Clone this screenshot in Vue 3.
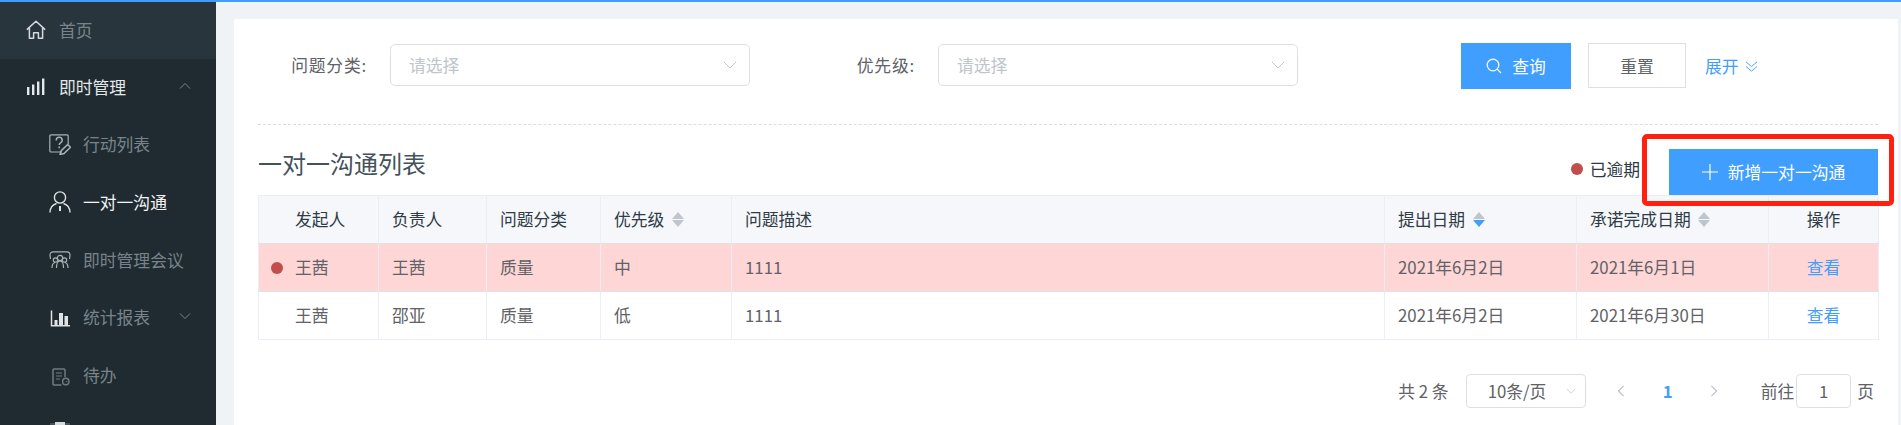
<script setup>
const menu = [
  { key: 'ask', label: '行动列表' },
  { key: 'person', label: '一对一沟通', active: true },
  { key: 'meet', label: '即时管理会议' },
  { key: 'stat', label: '统计报表', chevron: true },
  { key: 'todo', label: '待办' },
  { key: 'more', label: '' }
]
const columns = [
  { label: '发起人', cls: 'first' },
  { label: '负责人' },
  { label: '问题分类' },
  { label: '优先级', sort: 'none' },
  { label: '问题描述' },
  { label: '提出日期', sort: 'down' },
  { label: '承诺完成日期', sort: 'none' },
  { label: '操作', cls: 'center' }
]
const rows = [
  { overdue: true, cells: ['王茜', '王茜', '质量', '中', '1111', '2021年6月2日', '2021年6月1日'] },
  { overdue: false, cells: ['王茜', '邵亚', '质量', '低', '1111', '2021年6月2日', '2021年6月30日'] }
]
const widths = [120, 108, 114, 131, 653, 192, 192, 110]
</script>

<template>
  <div class="page">
    <aside class="side">
      <div class="home">
        <svg class="top-ic" viewBox="0 0 20 20" fill="none" stroke="currentColor" stroke-width="1.5"><path d="M.8 9.6 10 1.3l9.200 8.300M3.400 8v10.200h4.200v-5.400h4.800v5.400h4.200V8" stroke-linejoin="round"/></svg>
        <span>首页</span>
      </div>
      <div class="group">
        <svg class="top-ic" viewBox="0 0 20 20" fill="currentColor"><rect x="1" y="10" width="2.400" height="8"/><rect x="6" y="7.500" width="2.400" height="10.500"/><rect x="11" y="4.500" width="2.400" height="13.500"/><rect x="16" y="1.500" width="2.400" height="16.500"/></svg>
        <span>即时管理</span>
        <svg class="chev" viewBox="0 0 12 8" fill="none" stroke="currentColor"><path d="M1 6.500 6 1.500l5 5"/></svg>
      </div>
      <div v-for="m in menu" :key="m.key" class="sub" :class="[m.key, { active: m.active }]">
        <svg class="sub-ic" viewBox="0 0 22 22" fill="none" stroke="currentColor" stroke-width="1.200">
          <template v-if="m.key === 'ask'">
            <path d="M13 19H2a1.200 1.200 0 0 1-1.200-1.200V3A1.200 1.200 0 0 1 2 1.800h16A1.200 1.200 0 0 1 19.200 3v8"/>
            <path d="M7.200 7.500c0-4.200 6-4.200 6 0 0 2.200-3 2.200-3 4.500M10.200 13.500v1.800" stroke-width="1.500"/>
            <path d="m11 21.500 1.200-3.800 6.500-6.200 2.800 2.800-6.500 6.200z" stroke-width="1.500"/>
          </template>
          <template v-else-if="m.key === 'person'">
            <circle cx="11" cy="6.500" r="5.600" stroke-width="1.400"/>
            <path d="M1 21.500c0-5 3.500-8 6.500-9M21 21.500c0-5-3.500-8-6.500-9" stroke-width="1.400"/>
            <path d="M11 15v5" stroke-width="2"/>
          </template>
          <template v-else-if="m.key === 'meet'">
            <path d="M1.500 10 1 6c0-2 1.500-3.200 3-3.200h14c1.500 0 3 1.200 3 3.200l-.5 4"/>
            <circle cx="11" cy="9" r="2.700"/>
            <circle cx="6.500" cy="11" r="2.200"/>
            <circle cx="15.500" cy="11" r="2.200"/>
            <path d="M3 19c0-3 1-5 3-5.500M19 19c0-3-1-5-3-5.500M7.500 19c0-4 1.500-7 3.500-7s3.500 3 3.500 7"/>
          </template>
          <template v-else-if="m.key === 'stat'">
            <path d="M2.500 4.500v15.300H21" stroke-width="1.500"/>
            <g fill="currentColor" stroke="none"><rect x="5.500" y="14" width="3" height="5"/><rect x="10" y="7" width="4" height="12"/><rect x="15.500" y="10" width="3.500" height="9"/></g>
          </template>
          <template v-else-if="m.key === 'todo'">
            <path d="M12.500 21H5a1 1 0 0 1-1-1V6a1 1 0 0 1 1-1h10a1 1 0 0 1 1 1v7" stroke-width="1.500"/>
            <path d="M7 9h6M7 12h6M7 15h4"/>
            <circle cx="16.800" cy="17.500" r="3.200" stroke-width="1.400"/>
            <path d="M16.800 17.500h1.800" stroke-width=".8"/>
          </template>
          <template v-else>
            <path d="M1 3h5M16 3h5"/>
            <rect x="6" y="1" width="10" height="3" fill="#d8dcde" stroke="none"/>
          </template>
        </svg>
        <span>{{ m.label }}</span>
        <svg v-if="m.chevron" class="chev" viewBox="0 0 12 8" fill="none" stroke="currentColor"><path d="M1 1.500 6 6.500l5-5"/></svg>
      </div>
    </aside>

    <main class="main">
      <section class="card">
        <div class="filters">
          <div class="field">
            <label>问题分类:</label>
            <div class="select">
              <span>请选择</span>
              <svg viewBox="0 0 14 8" fill="none" stroke="currentColor"><path d="M1 1l6 6 6-6"/></svg>
            </div>
          </div>
          <div class="field second">
            <label>优先级:</label>
            <div class="select">
              <span>请选择</span>
              <svg viewBox="0 0 14 8" fill="none" stroke="currentColor"><path d="M1 1l6 6 6-6"/></svg>
            </div>
          </div>
          <button class="btn primary search">
            <svg viewBox="0 0 16 16" fill="none" stroke="currentColor" stroke-width="1.200"><circle cx="7" cy="7" r="5.800"/><path d="m11.200 11.200 3.800 3.800"/></svg>
            查询
          </button>
          <button class="btn reset">重置</button>
          <span class="expand">
            展开
            <svg viewBox="0 0 14 12" fill="none" stroke="currentColor"><path d="M1 1l6 5 6-5M1 6l6 5 6-5"/></svg>
          </span>
        </div>

        <div class="title-row">
          <h2>一对一沟通列表</h2>
          <div class="right">
            <span class="legend"><i class="dot"></i>已逾期</span>
            <button class="btn primary add">
              <svg viewBox="0 0 16 16" fill="none" stroke="currentColor" stroke-width="1.200"><path d="M8 0v16M0 8h16"/></svg>
              新增一对一沟通
            </button>
          </div>
          <div class="mark"></div>
        </div>

        <table class="table">
          <colgroup>
            <col v-for="(w, i) in widths" :key="i" :style="{ width: w + 'px' }" />
          </colgroup>
          <thead>
            <tr>
              <th v-for="c in columns" :key="c.label" :class="c.cls">
                {{ c.label }}
                <span v-if="c.sort" class="sort" :class="c.sort"><i class="up"></i><i class="dn"></i></span>
              </th>
            </tr>
          </thead>
          <tbody>
            <tr v-for="(r, ri) in rows" :key="ri" :class="{ overdue: r.overdue }">
              <td v-for="(cell, ci) in r.cells" :key="ci" :class="{ first: ci === 0 }">
                <i v-if="ci === 0 && r.overdue" class="dot row-dot"></i>{{ cell }}
              </td>
              <td class="center link">查看</td>
            </tr>
          </tbody>
        </table>

        <div class="pager">
          <span class="total">共 2 条</span>
          <div class="size">
            <span>10条/页</span>
            <svg viewBox="0 0 14 8" fill="none" stroke="currentColor"><path d="M1 1l6 6 6-6"/></svg>
          </div>
          <svg class="arrow prev" viewBox="0 0 8 14" fill="none" stroke="currentColor" stroke-width="1.500"><path d="M7 1 1 7l6 6"/></svg>
          <span class="num">1</span>
          <svg class="arrow next" viewBox="0 0 8 14" fill="none" stroke="currentColor" stroke-width="1.500"><path d="m1 1 6 6-6 6"/></svg>
          <span class="goto">前往</span>
          <div class="jump">1</div>
          <span class="unit">页</span>
        </div>
      </section>
    </main>
  </div>
</template>

<style>
html, body { margin: 0; height: 100%; overflow: hidden; background: #fff; }
</style>

<style scoped>
.page {
  display: flex;
  width: 1901px;
  height: 425px;
  overflow: hidden;
  box-sizing: border-box;
  border-top: 2px solid #409eff;
  font-family: "Noto Sans CJK SC", "Liberation Sans", sans-serif;
  font-size: 16.8px;
  color: #606266;
}
.side {
  width: 216px;
  flex: none;
  background: #1f2b31;
  color: #78848a;
  overflow: hidden;
}
.home, .group, .sub {
  display: flex;
  align-items: center;
  height: 57.6px;
  box-sizing: border-box;
  padding-bottom: 2px;
  position: relative;
}
.home { height: 57px; background: #29353c; padding-left: 26px; }
.home .top-ic { color: #d5dadc; }
.group { padding-left: 26px; color: #e4e8e9; }
.top-ic { width: 20px; height: 20px; margin-right: 13px; }
.sub { padding-left: 49px; }
.sub-ic { width: 22px; height: 22px; margin-right: 12px; flex: none; color: #a9b1b5; }
.sub.active { color: #f2f4f5; }
.sub.active .sub-ic { color: #dfe3e5; }
.sub.stat .sub-ic { color: #dfe3e5; }
.sub.todo .sub-ic { color: #6f7b80; }
.sub.more .sub-ic { color: #6f7b80; }
.chev { position: absolute; right: 25px; width: 12px; height: 8px; color: #78848a; top: 23px; }
.main {
  flex: 1;
  min-width: 0;
  background: #eff3f5;
  padding: 17px 3px 0 18px;
}
.card {
  background: #fff;
  height: 420px;
  padding: 25px 20px 0 24px;
  box-sizing: border-box;
}
.filters {
  display: flex;
  align-items: flex-start;
  height: 80px;
  box-sizing: content-box;
  border-bottom: 1px dashed #d9dee1;
}
.field { display: flex; align-items: center; }
.field.second { margin-left: 56px; }
.field label { width: 109px; margin-right: 23px; text-align: right; flex: none; color: #606266; letter-spacing: .8px; }
.select {
  width: 360px;
  height: 42px;
  box-sizing: border-box;
  border: 1px solid #dcdfe6;
  border-radius: 5px;
  display: flex;
  align-items: center;
  justify-content: space-between;
  padding: 0 12px 0 18px;
  color: #c0c4cc;
}
.select svg { width: 14px; height: 8px; color: #c0c4cc; }
.btn {
  font: inherit;
  cursor: pointer;
  border: 0;
  border-radius: 0;
  display: flex;
  align-items: center;
  justify-content: center;
}
.primary { background: #409eff; color: #fff; }
.search { width: 110px; height: 46px; margin-left: 163px; margin-top: -1px; }
.search svg { width: 16px; height: 16px; margin-right: 10px; }
.reset {
  width: 98px;
  height: 45px;
  margin-left: 17px;
  margin-top: -1px;
  background: #fff;
  border: 1px solid #dcdfe6;
  color: #606266;
}
.expand {
  margin-left: 19px;
  display: flex;
  align-items: center;
  height: 44px;
  color: #409eff;
}
.expand svg { width: 13px; height: 11px; margin-left: 6px; }
.title-row {
  position: relative;
  display: flex;
  justify-content: space-between;
  align-items: flex-end;
  height: 70px;
}
h2 {
  margin: 0;
  align-self: flex-start;
  padding-top: 20px;
  font-size: 24px;
  font-weight: 400;
  line-height: 36px;
  color: #44525b;
}
.right { display: flex; align-items: flex-start; }
.legend {
  display: flex;
  align-items: center;
  height: 40px;
  margin-right: 29px;
  color: #2d3a45;
}
.dot {
  display: inline-block;
  width: 12px;
  height: 12px;
  border-radius: 50%;
  background: #c14e4a;
}
.legend .dot { margin-right: 7px; }
.add { width: 209px; height: 46px; }
.add svg { width: 16px; height: 16px; margin-right: 10px; }
.mark {
  position: absolute;
  left: 1384px;
  top: 9px;
  width: 252px;
  height: 72px;
  box-sizing: border-box;
  border: 5px solid #ff2010;
  border-radius: 5px;
  pointer-events: none;
}
.table {
  width: 1620px;
  table-layout: fixed;
  border-collapse: collapse;
  border: 1px solid #ebeef5;
}
th, td {
  border-right: 1px solid #ebeef5;
  border-bottom: 1px solid #dfe3e8;
  padding: 0 13px 2px;
  text-align: left;
  font-weight: 400;
  white-space: nowrap;
  height: 48px;
  box-sizing: border-box;
}
th { background: #f5f7fb; color: #303b46; }
tbody tr:last-child td { border-bottom-color: #ebeef5; }
.first { padding-left: 36px; position: relative; }
.center { text-align: center; }
.overdue td { background: #ffd6d6; }
.link { color: #409eff; }
.row-dot { position: absolute; left: 12px; top: 18px; }
.sort { display: inline-block; vertical-align: middle; margin-left: 4px; width: 12px; height: 15px; position: relative; top: -1px; }
.sort i { position: absolute; left: 0; width: 0; height: 0; border-style: solid; border-color: transparent; }
.sort .up { top: 0; border-width: 0 6px 7px; border-bottom-color: #c0c4cc; }
.sort .dn { bottom: 0; border-width: 7px 6px 0; border-top-color: #c0c4cc; }
.sort.down .dn { border-top-color: #409eff; }
.pager {
  display: flex;
  align-items: center;
  height: 34px;
  margin-top: 34px;
  width: 1620px;
  justify-content: flex-end;
}
.total { margin-right: 17px; }
.size {
  width: 120px;
  height: 34px;
  box-sizing: border-box;
  border: 1px solid #dcdfe6;
  border-radius: 4px;
  display: flex;
  align-items: center;
  justify-content: space-between;
  padding: 0 9px 0 21px;
}
.size svg { width: 10px; height: 6px; color: #c0c4cc; }
.arrow { width: 8px; height: 12px; color: #c0c4cc; }
.prev { margin-left: 31px; }
.num { width: 12px; margin: 0 36px 0 37px; color: #409eff; font-weight: 700; text-align: center; }
.goto { margin-left: 43px; margin-right: 2px; }
.jump {
  width: 55px;
  height: 34px;
  box-sizing: border-box;
  border: 1px solid #dcdfe6;
  border-radius: 4px;
  display: flex;
  align-items: center;
  justify-content: center;
}
.unit { margin-left: 6px; margin-right: 4px; }
</style>
